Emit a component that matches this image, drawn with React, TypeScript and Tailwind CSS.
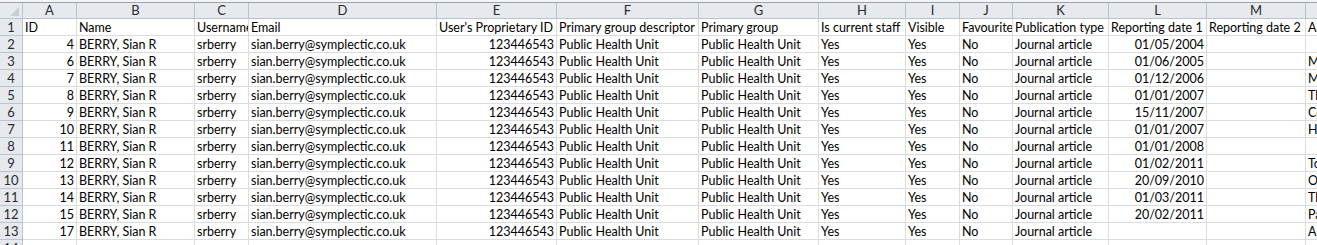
const cols = ['A', 'B', 'C', 'D', 'E', 'F', 'G', 'H', 'I', 'J', 'K', 'L', 'M', 'N'];

// true = right aligned (numbers / dates)
const numericCols = [true, false, false, false, true, false, false, false, false, false, false, true, false, false];

const header = [
  'ID',
  'Name',
  'Username',
  'Email',
  "User's Proprietary ID",
  'Primary group descriptor',
  'Primary group',
  'Is current staff',
  'Visible',
  'Favourite',
  'Publication type',
  'Reporting date 1',
  'Reporting date 2',
  'Abstract',
];

const rows = [
  { id: '4', date: '01/05/2004', abs: '' },
  { id: '6', date: '01/06/2005', abs: 'Measuring health outcomes' },
  { id: '7', date: '01/12/2006', abs: 'Methods for assessing' },
  { id: '8', date: '01/01/2007', abs: 'The impact of' },
  { id: '9', date: '15/11/2007', abs: 'Cervical screening' },
  { id: '10', date: '01/01/2007', abs: 'Health inequalities' },
  { id: '11', date: '01/01/2008', abs: '' },
  { id: '12', date: '01/02/2011', abs: 'Towards a framework' },
  { id: '13', date: '20/09/2010', abs: 'Obesity in children' },
  { id: '14', date: '01/03/2011', abs: 'The role of' },
  { id: '15', date: '20/02/2011', abs: 'Patterns of' },
  { id: '17', date: '', abs: 'A review of' },
];

const data = rows.map((r) => [
  r.id,
  'BERRY, Sian R',
  'srberry',
  'sian.berry@symplectic.co.uk',
  '123446543',
  'Public Health Unit',
  'Public Health Unit',
  'Yes',
  'Yes',
  'No',
  'Journal article',
  r.date,
  '',
  r.abs,
]);

const gridCols =
  'grid grid-cols-[23px_54px_118px_54px_188px_120px_142px_120px_87px_54px_53px_96px_98px_99px_200px]';

function RowNumber({ n }: { n: number | string }) {
  return (
    <div className="h-[17px] bg-[#e6e9ee] border-r border-b border-[#bcc3cc] text-[#2b2b2b] text-[13px] leading-[16px] text-center">
      {n}
    </div>
  );
}

function Cell({ value, right }: { value: string; right: boolean }) {
  return (
    <div
      className={`h-[17px] border-r border-b border-[#dadcdd] px-[2px] text-[12.5px] leading-[17px] text-black whitespace-nowrap overflow-hidden ${
        right ? 'text-right' : 'text-left'
      }`}
    >
      {value}
    </div>
  );
}

export default function App() {
  return (
    <div
      className="w-[1317px] h-[245px] overflow-hidden bg-white"
      style={{ fontFamily: 'Lato, "Liberation Sans", sans-serif' }}
    >
      <div className="h-[2px] bg-[#f3f4f6]"></div>
      <div className={`${gridCols} border-t border-[#9ea4ab]`}>
        {/* corner */}
        <div className="relative h-[16px] bg-[#e6e9ee] border-r border-b border-[#bcc3cc]">
          <div className="absolute right-[3px] bottom-[2px] w-0 h-0 border-l-[9px] border-l-transparent border-b-[9px] border-b-[#c9ced6]"></div>
        </div>
        {cols.map((c) => (
          <div
            key={c}
            className="h-[16px] bg-[#e6e9ee] border-r border-b border-[#bcc3cc] text-[#2b2b2b] text-[13px] leading-[15px] text-center"
          >
            {c}
          </div>
        ))}

        {/* header row */}
        <RowNumber n={1} />
        {header.map((h, i) => (
          <Cell key={i} value={h} right={false} />
        ))}

        {data.map((row, r) => (
          <div key={r} className="contents">
            <RowNumber n={r + 2} />
            {row.map((v, i) => (
              <Cell key={i} value={v} right={numericCols[i]} />
            ))}
          </div>
        ))}

        {/* partial row 14 */}
        <RowNumber n={14} />
        {cols.map((c, i) => (
          <Cell key={c} value="" right={numericCols[i]} />
        ))}
      </div>
    </div>
  );
}
